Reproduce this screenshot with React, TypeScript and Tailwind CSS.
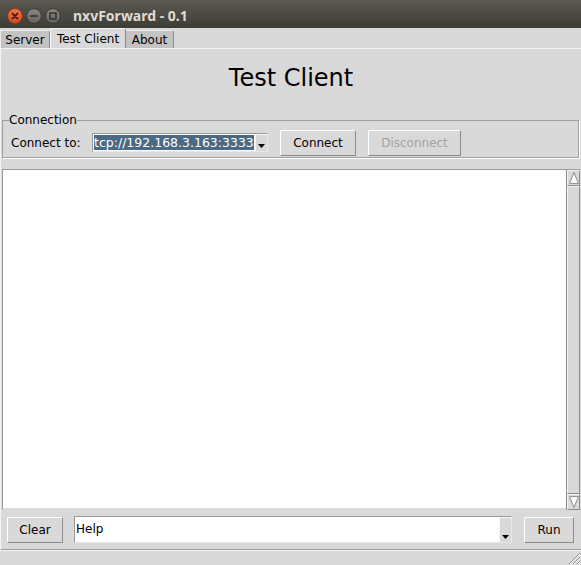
import React from "react";

function WinBtn({ kind }: { kind: "close" | "min" | "max" }) {
  const id = `g-${kind}`;
  const isClose = kind === "close";
  return (
    <svg width="16" height="16" viewBox="0 0 16 16" className="shrink-0">
      <defs>
        <linearGradient id={id} x1="0" y1="0" x2="0" y2="1">
          <stop offset="0" stopColor={isClose ? "#f2784b" : "#8a8883"} />
          <stop offset="1" stopColor={isClose ? "#d8491b" : "#63625d"} />
        </linearGradient>
      </defs>
      <circle cx="8" cy="8" r="7.4" fill={`url(#${id})`} stroke={isClose ? "#8e3514" : "#34332f"} strokeWidth="0.9" />
      {kind === "close" && (
        <path d="M5.4 5.4 L10.6 10.6 M10.6 5.4 L5.4 10.6" stroke="#3a1a0e" strokeWidth="1.6" strokeLinecap="round" />
      )}
      {kind === "min" && <path d="M4.8 8 H11.2" stroke="#2f2e2b" strokeWidth="1.7" strokeLinecap="round" />}
      {kind === "max" && <rect x="5" y="5" width="6" height="6" fill="none" stroke="#2f2e2b" strokeWidth="1.4" />}
    </svg>
  );
}

function DropArrow() {
  return (
    <div className="w-[12px] h-full bg-[#d9d9d9] border-l border-t border-l-[#f4f4f4] border-t-[#f4f4f4] flex items-end justify-center pb-[3px] shrink-0">
      <svg width="7" height="4" viewBox="0 0 7 4">
        <path d="M0 0 H7 L3.5 4 Z" fill="#000" />
      </svg>
    </div>
  );
}

function ScrollArrow({ up }: { up: boolean }) {
  return (
    <div className="h-[16px] w-full bg-[#d9d9d9] border border-t-[#f4f4f4] border-l-[#f4f4f4] border-b-[#8c8c8c] border-r-[#8c8c8c] flex items-center justify-center shrink-0">
      <svg width="10" height="12" viewBox="0 0 10 12">
        {up ? (
          <path d="M5 0.6 L9.4 11.4 H0.6 Z" fill="#fff" stroke="#8c8c8c" strokeWidth="1" />
        ) : (
          <path d="M5 11.4 L9.4 0.6 H0.6 Z" fill="#fff" stroke="#8c8c8c" strokeWidth="1" />
        )}
      </svg>
    </div>
  );
}

function TkButton({ label, width, disabled }: { label: string; width: string; disabled?: boolean }) {
  return (
    <div
      className={`${width} h-[26px] shrink-0 bg-[#d9d9d9] border border-t-[#ffffff] border-l-[#ffffff] border-b-[#8a8a8a] border-r-[#8a8a8a] flex items-center justify-center text-[12px] ${
        disabled ? "text-[#a3a3a3]" : "text-black"
      }`}
    >
      {label}
    </div>
  );
}

export default function App() {
  return (
    <div className="w-[581px] h-[565px] bg-[#d9d9d9] flex flex-col overflow-hidden font-['DejaVu_Sans',sans-serif] text-[12px] text-black">
      {/* Title bar */}
      <div className="h-[28px] shrink-0 bg-linear-to-b from-[#5b5951] to-[#3d3c37] flex items-center pl-[7px] pt-[3px] gap-[3px]">
        <WinBtn kind="close" />
        <WinBtn kind="min" />
        <WinBtn kind="max" />
        <span className="ml-[9px] font-['Noto_Sans',sans-serif] font-bold text-[14px] leading-[16px] text-[#dfdbd2]">
          nxvForward - 0.1
        </span>
      </div>

      {/* Tabs */}
      <div className="h-[20px] shrink-0 flex items-end">
        <div className="w-[50px] h-[18px] bg-[#c3c3c3] border-t border-l border-r border-t-[#ececec] border-l-[#ececec] border-r-[#8c8c8c] rounded-tr-[3px] flex items-center justify-center leading-[14px]">
          Server
        </div>
        <div className="w-[76px] h-[20px] bg-[#d9d9d9] border-t border-l border-r border-t-[#f4f4f4] border-l-[#f4f4f4] border-r-[#8c8c8c] rounded-tr-[3px] flex items-center justify-center leading-[14px] pt-[1px]">
          Test Client
        </div>
        <div className="w-[48px] h-[18px] bg-[#c3c3c3] border-t border-r border-t-[#ececec] border-r-[#8c8c8c] rounded-tr-[3px] flex items-center justify-center leading-[14px]">
          About
        </div>
      </div>

      {/* Pane */}
      <div className="flex-1 flex flex-col border-t border-t-[#f4f4f4] border-l border-l-[#f4f4f4] border-b border-b-[#9a9a9a] min-h-0">
        <div className="h-[63px] shrink-0 flex items-center justify-center pb-[6px] text-[24px] leading-[28px]">
          Test Client
        </div>

        <fieldset className="shrink-0 ml-[1px] mr-[2px] border border-[#a0a0a0] shadow-[1px_1px_0_#ffffff] pl-[8px] pt-[2px] pb-[2px]">
          <legend className="-ml-[2px] px-0 text-[12px] leading-[16px]">Connection</legend>
          <div className="flex items-center h-[25px]">
            <span className="w-[81px] shrink-0 leading-[14px]">Connect to:</span>
            <div className="w-[176px] h-[19px] shrink-0 bg-white border border-t-[#9a9a9a] border-l-[#9a9a9a] border-b-[#e8e8e8] border-r-[#e8e8e8] flex">
              <div className="flex-1 overflow-hidden flex items-center pl-[1px]">
                <span className="bg-[#4a6984] text-white text-[12.5px] leading-[15px] whitespace-nowrap">
                  tcp://192.168.3.163:3333
                </span>
              </div>
              <DropArrow />
            </div>
            <div className="ml-[12px]">
              <TkButton label="Connect" width="w-[76px]" />
            </div>
            <div className="ml-[12px]">
              <TkButton label="Disconnect" width="w-[93px]" disabled />
            </div>
          </div>
        </fieldset>

        <div className="mt-[11px] ml-[1px] mr-[1px] h-[341px] shrink-0 flex">
          <div className="flex-1 bg-white border-t border-l border-t-[#9a9a9a] border-l-[#9a9a9a] border-b-[2px] border-b-[#d9d9d9]" />
          <div className="w-[14px] shrink-0 flex flex-col bg-[#c3c3c3] border-l border-l-[#8c8c8c] border-t border-t-[#9a9a9a]">
            <ScrollArrow up />
            <div className="flex-1 bg-[#d9d9d9] border border-t-[#f4f4f4] border-l-[#f4f4f4] border-b-[#8c8c8c] border-r-[#8c8c8c]" />
            <ScrollArrow up={false} />
          </div>
        </div>

        <div className="h-[39px] shrink-0 flex items-center">
          <div className="ml-[6px]">
            <TkButton label="Clear" width="w-[56px]" />
          </div>
          <div className="ml-[11px] flex-1 h-[27px] bg-white border border-t-[#9a9a9a] border-l-[#9a9a9a] border-b-[#e8e8e8] border-r-[#e8e8e8] flex">
            <div className="flex-1 flex items-center pl-[1px] text-[12px] leading-[15px]">Help</div>
            <DropArrow />
          </div>
          <div className="ml-[12px] mr-[7px]">
            <TkButton label="Run" width="w-[50px]" />
          </div>
        </div>
      </div>

      {/* Status / size grip */}
      <div className="h-[15px] shrink-0 flex justify-end items-end border-t border-t-[#f4f4f4]">
        <svg width="14" height="14" viewBox="0 0 14 14">
          <path d="M13 2 L2 13 M13 6 L6 13 M13 10 L10 13" stroke="#8c8c8c" strokeWidth="1" />
          <path d="M13 3 L3 13 M13 7 L7 13 M13 11 L11 13" stroke="#ffffff" strokeWidth="1" />
        </svg>
      </div>
    </div>
  );
}
